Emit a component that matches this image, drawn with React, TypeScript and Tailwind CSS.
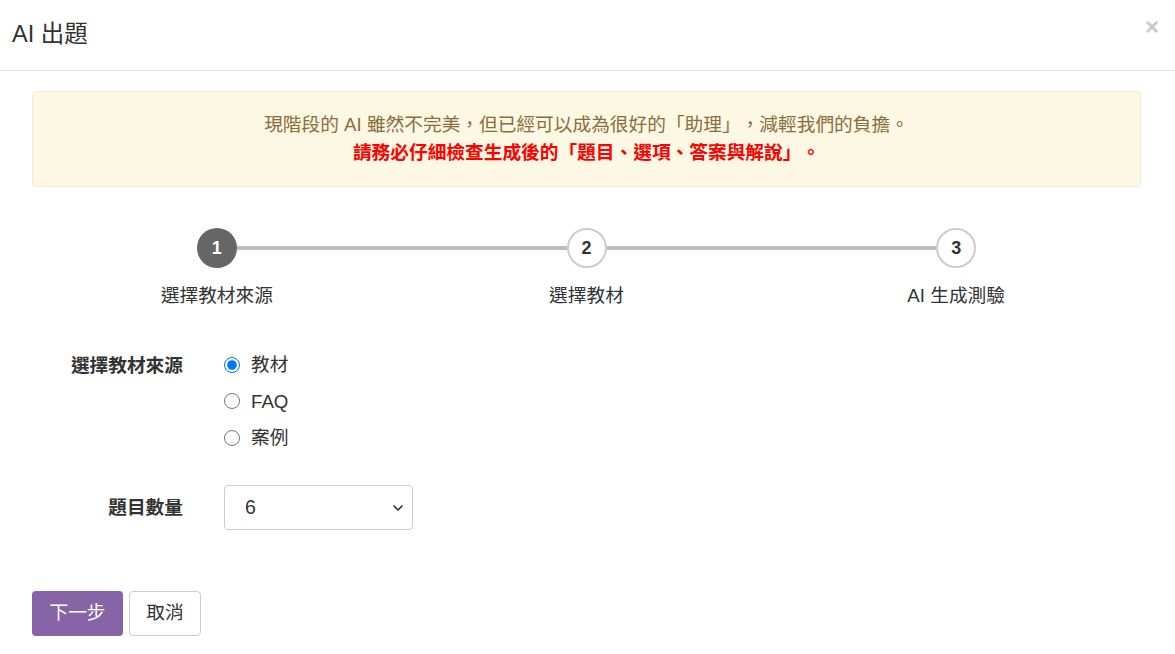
import { ChevronDown } from 'lucide-react';

const font = { fontFamily: '"Liberation Sans", "Noto Sans CJK TC", sans-serif' };

const steps = ['選擇教材來源', '選擇教材', 'AI 生成測驗'];

function Stepper({ current }: { current: number }) {
  return (
    <div className="grid grid-cols-3">
      {steps.map((label, i) => (
        <div key={label} className="flex flex-col items-center">
          <div className="flex w-full items-center">
            <div className={`h-1 flex-1 ${i === 0 ? 'bg-transparent' : 'bg-[#bbbbbb]'}`} />
            {i === current ? (
              <div className="flex h-10 w-10 items-center justify-center rounded-full bg-[#666666] text-[18px] font-bold text-white">
                {i + 1}
              </div>
            ) : (
              <div className="flex h-10 w-10 items-center justify-center rounded-full border-2 border-[#cccccc] bg-white text-[18px] font-bold text-[#333333]">
                {i + 1}
              </div>
            )}
            <div className={`h-1 flex-1 ${i === steps.length - 1 ? 'bg-transparent' : 'bg-[#bbbbbb]'}`} />
          </div>
          <div className="mt-[14px] text-[18.7px] leading-[27px] text-[#333333]">{label}</div>
        </div>
      ))}
    </div>
  );
}

export default function App() {
  return (
    <div className="min-h-[654px] w-full bg-white text-[#333333] [text-spacing-trim:space-all]" style={font}>
      <div className="flex h-[71px] items-center justify-between border-b border-[#e5e5e5] pl-3 pr-4">
        <h4 className="text-[23.5px] leading-none text-[#333333]">AI 出題</h4>
        <button className="mb-[16px] text-[24px] font-bold leading-none text-[#c8c8c8]">×</button>
      </div>

      <div className="pl-8 pr-[34px] pt-5">
        <div className="rounded border border-[#faebcc] bg-[#fcf8e3] py-[19px] text-center text-[18.7px] leading-[28px]">
          <div className="text-[#8a6d3b]">現階段的 AI 雖然不完美，但已經可以成為很好的「助理」，減輕我們的負擔。</div>
          <div className="font-bold text-[#ff0000]">請務必仔細檢查生成後的「題目、選項、答案與解說」。</div>
        </div>

        <div className="mt-[41px]">
          <Stepper current={0} />
        </div>

        <div className="mt-[42px] flex flex-col gap-[34px]">
          <div className="flex items-start gap-[41px]">
            <div className="w-[151px] pt-[1px] text-right text-[18.7px] font-bold leading-[27px]">選擇教材來源</div>
            <div className="flex flex-col gap-[9.5px]">
              {['教材', 'FAQ', '案例'].map((opt, i) => (
                <label key={opt} className="flex items-center gap-[11px] text-[18.7px] leading-[27px]">
                  <input
                    type="radio"
                    name="source"
                    defaultChecked={i === 0}
                    className="m-0 h-4 w-4 accent-[#0075ff]"
                  />
                  {opt}
                </label>
              ))}
            </div>
          </div>

          <div className="flex items-center gap-[41px]">
            <div className="w-[151px] text-right text-[18.7px] font-bold leading-[27px]">題目數量</div>
            <div className="flex h-[45px] w-[189px] items-center justify-between rounded border border-[#cccccc] pl-[20px] pr-[6px] text-[19.5px]">
              <span>6</span>
              <ChevronDown className="h-4 w-4 text-[#333333]" strokeWidth={2.5} />
            </div>
          </div>
        </div>

        <div className="mt-[61px] flex gap-[6px] pb-5">
          <button className="h-[45px] w-[91px] rounded bg-[#8763a8] text-[18.7px] text-white">下一步</button>
          <button className="h-[45px] w-[72px] rounded border border-[#cccccc] bg-white text-[18.7px] text-[#333333]">取消</button>
        </div>
      </div>
    </div>
  );
}
